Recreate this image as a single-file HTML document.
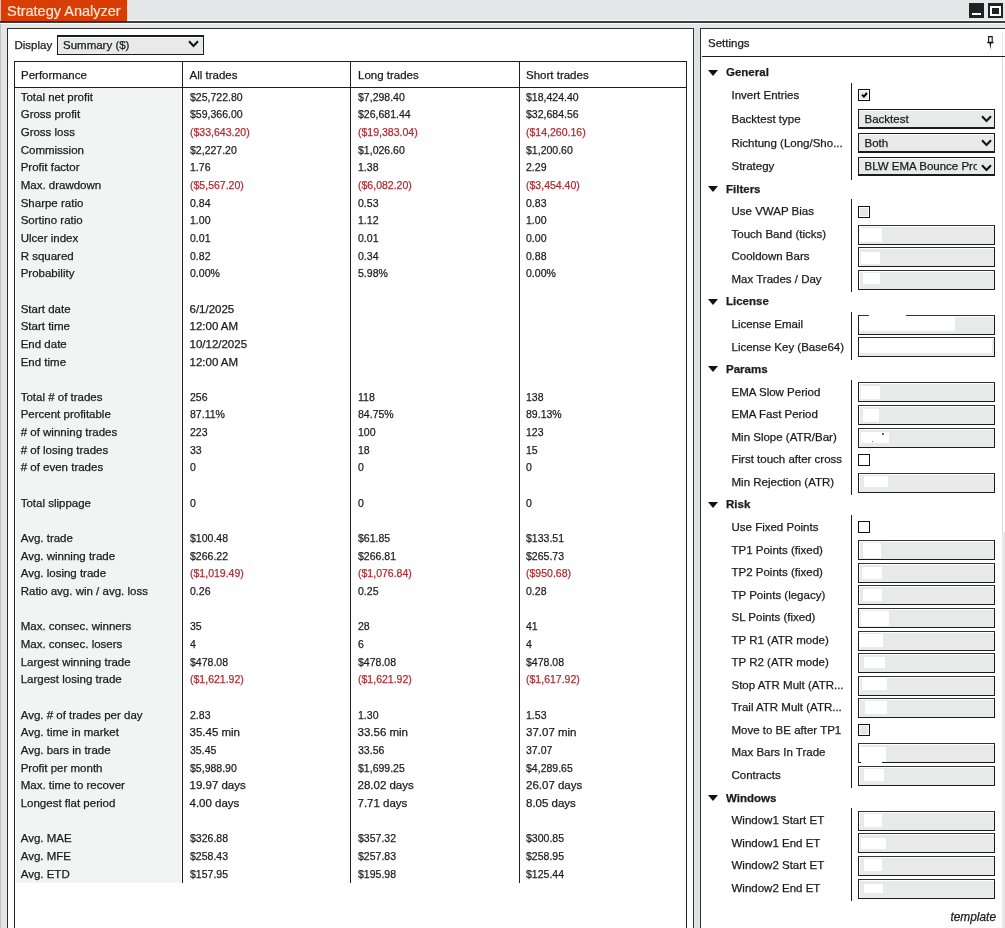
<!DOCTYPE html>
<html><head><meta charset="utf-8"><title>Strategy Analyzer</title>
<style>
*{box-sizing:border-box}
html,body{margin:0;padding:0}
body{width:1005px;height:928px;overflow:hidden;position:relative;background:#e4e5e7;font-family:"Liberation Sans",sans-serif;font-size:11.5px;color:#1b1b1b;-webkit-text-stroke:0.25px #1b1b1b}
.r{-webkit-text-stroke-color:#ad2b31}
.a{position:absolute}
.t{position:absolute;white-space:nowrap;line-height:14px}
.n{transform:scaleX(0.915);transform-origin:0 0}
.r{color:#ad2b31}
.b{font-weight:bold}
.hl{position:absolute;background:#1e1e1e}
.dd{position:absolute;border:1px solid #1c1c1c;border-bottom-width:2px;background:#e8e9e9;box-shadow:inset 0 1px 0 #fff}
.tb{position:absolute;border:1px solid #1c1c1c;border-top-color:#333;box-shadow:inset 1px 1px 0 #fff,0 0.6px 0 #444;background:#e8e9e9;box-shadow:inset 1px 1px 0 #fff}
.chk{position:absolute;width:12px;height:12px;border:1.3px solid #111;background:#fff;box-shadow:inset 0 0 0 1px #fff}
.blob{position:absolute;background:#fff}
</style></head><body><div class="a" style="left:0;top:0;width:1005px;height:928px;will-change:transform">

<div class="a" style="left:0;top:0;width:1005px;height:21px;background:#e6e7e9"></div>
<div class="a" style="left:0;top:0;width:1px;height:21px;background:#f3b59e"></div>
<div class="a" style="left:1px;top:0;width:126px;height:21px;background:#d93d04"></div>
<div class="t" style="left:7px;top:1.6px;font-size:14.5px;line-height:18px;color:#ffe6d8;-webkit-text-stroke:0.2px #ffe6d8">Strategy Analyzer</div>
<div class="a" style="left:127px;top:20px;width:878px;height:1px;background:#fafafa"></div>
<div class="a" style="left:0;top:21px;width:1005px;height:2px;background:#3f3f40"></div>
<div class="a" style="left:0;top:21px;width:127px;height:1px;background:#5b1c08"></div>
<div class="a" style="left:0;top:23px;width:1005px;height:1px;background:#fbfbfb"></div>
<div class="a" style="left:969px;top:3px;width:15px;height:15px;background:#222"></div>
<div class="a" style="left:972px;top:13px;width:9px;height:2px;background:#fff"></div>
<div class="a" style="left:988px;top:3px;width:15px;height:15px;background:#222"></div>
<div class="a" style="left:990px;top:6px;width:11px;height:10px;background:#fff"></div>
<div class="a" style="left:992px;top:8px;width:7px;height:6px;background:#222"></div>
<div class="a" style="left:0;top:24px;width:1px;height:904px;background:#c2c3c5"></div>
<div class="a" style="left:7px;top:28px;width:687px;height:900px;background:#fff;border:1px solid #2e2e2e;border-bottom:none"></div>
<div class="a" style="left:695px;top:29px;width:4px;height:899px;background:#dfe0e2"></div>
<div class="a" style="left:700px;top:28px;width:305px;height:900px;background:#fff;border-left:1px solid #2e2e2e;border-top:1px solid #2e2e2e"></div>
<div class="a" style="left:1002px;top:31px;width:1px;height:26px;background:#e8e8e8"></div>
<div class="a" style="left:1002px;top:532px;width:3px;height:396px;background:#e8e8e8"></div>
<div class="a" style="left:1002px;top:57px;width:1px;height:475px;background:#dadada"></div>
<div class="t" style="left:14.5px;top:37.90px">Display</div>
<div class="dd" style="left:57px;top:35.3px;width:147px;height:19.7px;border-top-width:2px;border-bottom-width:1px"></div>
<div class="t" style="left:63px;top:38.10px">Summary ($)</div>
<svg class="a" style="left:188.0px;top:40.0px" width="11" height="8" viewBox="0 0 11 8"><path d="M1 1.2 L5.5 6 L10 1.2" fill="none" stroke="#111" stroke-width="2"/></svg>
<div class="a" style="left:14px;top:61px;width:673px;height:867px;border:1px solid #1e1e1e;border-bottom:none;background:#fff"></div>
<div class="hl" style="left:14px;top:87px;width:673px;height:1px"></div>
<div class="a" style="left:15.6px;top:88px;width:165.4px;height:795px;background:#f2f3f3"></div>
<div class="hl" style="left:182px;top:62px;width:1px;height:821px"></div>
<div class="hl" style="left:350px;top:62px;width:1px;height:821px"></div>
<div class="hl" style="left:519px;top:62px;width:1px;height:821px"></div>
<div class="t" style="left:21.0px;top:67.50px">Performance</div>
<div class="t" style="left:189.5px;top:67.50px">All trades</div>
<div class="t" style="left:358.0px;top:67.50px">Long trades</div>
<div class="t" style="left:526.0px;top:67.50px">Short trades</div>
<div class="t" style="left:20.7px;top:89.70px">Total net profit</div>
<div class="t n" style="left:189.5px;top:89.70px">$25,722.80</div>
<div class="t n" style="left:357.5px;top:89.70px">$7,298.40</div>
<div class="t n" style="left:526.0px;top:89.70px">$18,424.40</div>
<div class="t" style="left:20.7px;top:107.36px">Gross profit</div>
<div class="t n" style="left:189.5px;top:107.36px">$59,366.00</div>
<div class="t n" style="left:357.5px;top:107.36px">$26,681.44</div>
<div class="t n" style="left:526.0px;top:107.36px">$32,684.56</div>
<div class="t" style="left:20.7px;top:125.01px">Gross loss</div>
<div class="t r n" style="left:189.5px;top:125.01px">($33,643.20)</div>
<div class="t r n" style="left:357.5px;top:125.01px">($19,383.04)</div>
<div class="t r n" style="left:526.0px;top:125.01px">($14,260.16)</div>
<div class="t" style="left:20.7px;top:142.66px">Commission</div>
<div class="t n" style="left:189.5px;top:142.66px">$2,227.20</div>
<div class="t n" style="left:357.5px;top:142.66px">$1,026.60</div>
<div class="t n" style="left:526.0px;top:142.66px">$1,200.60</div>
<div class="t" style="left:20.7px;top:160.32px">Profit factor</div>
<div class="t n" style="left:189.5px;top:160.32px">1.76</div>
<div class="t n" style="left:357.5px;top:160.32px">1.38</div>
<div class="t n" style="left:526.0px;top:160.32px">2.29</div>
<div class="t" style="left:20.7px;top:177.97px">Max. drawdown</div>
<div class="t r n" style="left:189.5px;top:177.97px">($5,567.20)</div>
<div class="t r n" style="left:357.5px;top:177.97px">($6,082.20)</div>
<div class="t r n" style="left:526.0px;top:177.97px">($3,454.40)</div>
<div class="t" style="left:20.7px;top:195.63px">Sharpe ratio</div>
<div class="t n" style="left:189.5px;top:195.63px">0.84</div>
<div class="t n" style="left:357.5px;top:195.63px">0.53</div>
<div class="t n" style="left:526.0px;top:195.63px">0.83</div>
<div class="t" style="left:20.7px;top:213.28px">Sortino ratio</div>
<div class="t n" style="left:189.5px;top:213.28px">1.00</div>
<div class="t n" style="left:357.5px;top:213.28px">1.12</div>
<div class="t n" style="left:526.0px;top:213.28px">1.00</div>
<div class="t" style="left:20.7px;top:230.94px">Ulcer index</div>
<div class="t n" style="left:189.5px;top:230.94px">0.01</div>
<div class="t n" style="left:357.5px;top:230.94px">0.01</div>
<div class="t n" style="left:526.0px;top:230.94px">0.00</div>
<div class="t" style="left:20.7px;top:248.60px">R squared</div>
<div class="t n" style="left:189.5px;top:248.60px">0.82</div>
<div class="t n" style="left:357.5px;top:248.60px">0.34</div>
<div class="t n" style="left:526.0px;top:248.60px">0.88</div>
<div class="t" style="left:20.7px;top:266.25px">Probability</div>
<div class="t n" style="left:189.5px;top:266.25px">0.00%</div>
<div class="t n" style="left:357.5px;top:266.25px">5.98%</div>
<div class="t n" style="left:526.0px;top:266.25px">0.00%</div>
<div class="t" style="left:20.7px;top:301.56px">Start date</div>
<div class="t" style="left:189.5px;top:301.56px">6/1/2025</div>
<div class="t" style="left:20.7px;top:319.21px">Start time</div>
<div class="t" style="left:189.5px;top:319.21px">12:00 AM</div>
<div class="t" style="left:20.7px;top:336.87px">End date</div>
<div class="t" style="left:189.5px;top:336.87px">10/12/2025</div>
<div class="t" style="left:20.7px;top:354.53px">End time</div>
<div class="t" style="left:189.5px;top:354.53px">12:00 AM</div>
<div class="t" style="left:20.7px;top:389.83px">Total # of trades</div>
<div class="t n" style="left:189.5px;top:389.83px">256</div>
<div class="t n" style="left:357.5px;top:389.83px">118</div>
<div class="t n" style="left:526.0px;top:389.83px">138</div>
<div class="t" style="left:20.7px;top:407.49px">Percent profitable</div>
<div class="t n" style="left:189.5px;top:407.49px">87.11%</div>
<div class="t n" style="left:357.5px;top:407.49px">84.75%</div>
<div class="t n" style="left:526.0px;top:407.49px">89.13%</div>
<div class="t" style="left:20.7px;top:425.15px"># of winning trades</div>
<div class="t n" style="left:189.5px;top:425.15px">223</div>
<div class="t n" style="left:357.5px;top:425.15px">100</div>
<div class="t n" style="left:526.0px;top:425.15px">123</div>
<div class="t" style="left:20.7px;top:442.80px"># of losing trades</div>
<div class="t n" style="left:189.5px;top:442.80px">33</div>
<div class="t n" style="left:357.5px;top:442.80px">18</div>
<div class="t n" style="left:526.0px;top:442.80px">15</div>
<div class="t" style="left:20.7px;top:460.45px"># of even trades</div>
<div class="t n" style="left:189.5px;top:460.45px">0</div>
<div class="t n" style="left:357.5px;top:460.45px">0</div>
<div class="t n" style="left:526.0px;top:460.45px">0</div>
<div class="t" style="left:20.7px;top:495.77px">Total slippage</div>
<div class="t n" style="left:189.5px;top:495.77px">0</div>
<div class="t n" style="left:357.5px;top:495.77px">0</div>
<div class="t n" style="left:526.0px;top:495.77px">0</div>
<div class="t" style="left:20.7px;top:531.08px">Avg. trade</div>
<div class="t n" style="left:189.5px;top:531.08px">$100.48</div>
<div class="t n" style="left:357.5px;top:531.08px">$61.85</div>
<div class="t n" style="left:526.0px;top:531.08px">$133.51</div>
<div class="t" style="left:20.7px;top:548.73px">Avg. winning trade</div>
<div class="t n" style="left:189.5px;top:548.73px">$266.22</div>
<div class="t n" style="left:357.5px;top:548.73px">$266.81</div>
<div class="t n" style="left:526.0px;top:548.73px">$265.73</div>
<div class="t" style="left:20.7px;top:566.39px">Avg. losing trade</div>
<div class="t r n" style="left:189.5px;top:566.39px">($1,019.49)</div>
<div class="t r n" style="left:357.5px;top:566.39px">($1,076.84)</div>
<div class="t r n" style="left:526.0px;top:566.39px">($950.68)</div>
<div class="t" style="left:20.7px;top:584.04px">Ratio avg. win / avg. loss</div>
<div class="t n" style="left:189.5px;top:584.04px">0.26</div>
<div class="t n" style="left:357.5px;top:584.04px">0.25</div>
<div class="t n" style="left:526.0px;top:584.04px">0.28</div>
<div class="t" style="left:20.7px;top:619.35px">Max. consec. winners</div>
<div class="t n" style="left:189.5px;top:619.35px">35</div>
<div class="t n" style="left:357.5px;top:619.35px">28</div>
<div class="t n" style="left:526.0px;top:619.35px">41</div>
<div class="t" style="left:20.7px;top:637.01px">Max. consec. losers</div>
<div class="t n" style="left:189.5px;top:637.01px">4</div>
<div class="t n" style="left:357.5px;top:637.01px">6</div>
<div class="t n" style="left:526.0px;top:637.01px">4</div>
<div class="t" style="left:20.7px;top:654.66px">Largest winning trade</div>
<div class="t n" style="left:189.5px;top:654.66px">$478.08</div>
<div class="t n" style="left:357.5px;top:654.66px">$478.08</div>
<div class="t n" style="left:526.0px;top:654.66px">$478.08</div>
<div class="t" style="left:20.7px;top:672.32px">Largest losing trade</div>
<div class="t r n" style="left:189.5px;top:672.32px">($1,621.92)</div>
<div class="t r n" style="left:357.5px;top:672.32px">($1,621.92)</div>
<div class="t r n" style="left:526.0px;top:672.32px">($1,617.92)</div>
<div class="t" style="left:20.7px;top:707.63px">Avg. # of trades per day</div>
<div class="t n" style="left:189.5px;top:707.63px">2.83</div>
<div class="t n" style="left:357.5px;top:707.63px">1.30</div>
<div class="t n" style="left:526.0px;top:707.63px">1.53</div>
<div class="t" style="left:20.7px;top:725.28px">Avg. time in market</div>
<div class="t" style="left:189.5px;top:725.28px">35.45 min</div>
<div class="t" style="left:357.5px;top:725.28px">33.56 min</div>
<div class="t" style="left:526.0px;top:725.28px">37.07 min</div>
<div class="t" style="left:20.7px;top:742.94px">Avg. bars in trade</div>
<div class="t n" style="left:189.5px;top:742.94px">35.45</div>
<div class="t n" style="left:357.5px;top:742.94px">33.56</div>
<div class="t n" style="left:526.0px;top:742.94px">37.07</div>
<div class="t" style="left:20.7px;top:760.59px">Profit per month</div>
<div class="t n" style="left:189.5px;top:760.59px">$5,988.90</div>
<div class="t n" style="left:357.5px;top:760.59px">$1,699.25</div>
<div class="t n" style="left:526.0px;top:760.59px">$4,289.65</div>
<div class="t" style="left:20.7px;top:778.25px">Max. time to recover</div>
<div class="t" style="left:189.5px;top:778.25px">19.97 days</div>
<div class="t" style="left:357.5px;top:778.25px">28.02 days</div>
<div class="t" style="left:526.0px;top:778.25px">26.07 days</div>
<div class="t" style="left:20.7px;top:795.90px">Longest flat period</div>
<div class="t" style="left:189.5px;top:795.90px">4.00 days</div>
<div class="t" style="left:357.5px;top:795.90px">7.71 days</div>
<div class="t" style="left:526.0px;top:795.90px">8.05 days</div>
<div class="t" style="left:20.7px;top:831.21px">Avg. MAE</div>
<div class="t n" style="left:189.5px;top:831.21px">$326.88</div>
<div class="t n" style="left:357.5px;top:831.21px">$357.32</div>
<div class="t n" style="left:526.0px;top:831.21px">$300.85</div>
<div class="t" style="left:20.7px;top:848.87px">Avg. MFE</div>
<div class="t n" style="left:189.5px;top:848.87px">$258.43</div>
<div class="t n" style="left:357.5px;top:848.87px">$257.83</div>
<div class="t n" style="left:526.0px;top:848.87px">$258.95</div>
<div class="t" style="left:20.7px;top:866.52px">Avg. ETD</div>
<div class="t n" style="left:189.5px;top:866.52px">$157.95</div>
<div class="t n" style="left:357.5px;top:866.52px">$195.98</div>
<div class="t n" style="left:526.0px;top:866.52px">$125.44</div>
<div class="t" style="left:708px;top:36.00px">Settings</div>
<div class="hl" style="left:702px;top:56px;width:303px;height:1px"></div>
<svg class="a" style="left:985px;top:35px" width="11" height="16" viewBox="0 0 11 16"><path d="M3.6 1.6 H7.2 V7.4 H3.6 Z" fill="#fff" stroke="#111" stroke-width="1.1"/><path d="M2.2 7.6 H8.6" stroke="#111" stroke-width="1.3"/><path d="M4.5 8 L5.4 14.5 L6.3 8 Z" fill="#111"/></svg>
<svg class="a" style="left:707.5px;top:69.50px" width="10" height="6" viewBox="0 0 10 6"><path d="M0 0 H10 L5 6 Z" fill="#111"/></svg>
<div class="t b" style="left:726px;top:65.30px">General</div>
<div class="t" style="left:731.5px;top:87.60px">Invert Entries</div>
<div class="chk" style="left:858px;top:89.00px;background:#e6e7e7"></div>
<svg class="a" style="left:860.5px;top:92.40px" width="7" height="7" viewBox="0 0 7 7"><path d="M1 2.6 L2.9 4.6 L6 1" fill="none" stroke="#000" stroke-width="2"/></svg>
<div class="t" style="left:731.5px;top:111.50px">Backtest type</div>
<div class="dd" style="left:858px;top:108.50px;width:137px;height:20.5px"></div>
<div class="t" style="left:864.5px;top:111.50px;width:112px;overflow:hidden">Backtest</div>
<svg class="a" style="left:981.0px;top:115.0px" width="11" height="8" viewBox="0 0 11 8"><path d="M1 1.2 L5.5 6 L10 1.2" fill="none" stroke="#111" stroke-width="2"/></svg>
<div class="t" style="left:731.5px;top:135.90px">Richtung (Long/Sho...</div>
<div class="dd" style="left:858px;top:132.80px;width:137px;height:20.5px"></div>
<div class="t" style="left:864.5px;top:135.90px;width:112px;overflow:hidden">Both</div>
<svg class="a" style="left:981.0px;top:139.3px" width="11" height="8" viewBox="0 0 11 8"><path d="M1 1.2 L5.5 6 L10 1.2" fill="none" stroke="#111" stroke-width="2"/></svg>
<div class="t" style="left:731.5px;top:159.30px">Strategy</div>
<div class="dd" style="left:858px;top:157.40px;width:137px;height:19.0px"></div>
<div class="t" style="left:864.5px;top:159.30px;width:112px;overflow:hidden">BLW EMA Bounce Pro</div>
<svg class="a" style="left:981.0px;top:163.9px" width="11" height="8" viewBox="0 0 11 8"><path d="M1 1.2 L5.5 6 L10 1.2" fill="none" stroke="#111" stroke-width="2"/></svg>
<svg class="a" style="left:707.5px;top:185.90px" width="10" height="6" viewBox="0 0 10 6"><path d="M0 0 H10 L5 6 Z" fill="#111"/></svg>
<div class="t b" style="left:726px;top:181.70px">Filters</div>
<div class="t" style="left:731.5px;top:204.25px">Use VWAP Bias</div>
<div class="chk" style="left:858px;top:205.65px;background:#e6e7e7"></div>
<div class="t" style="left:731.5px;top:226.80px">Touch Band (ticks)</div>
<div class="tb" style="left:858px;top:224.60px;width:137px;height:20px"></div>
<div class="blob" style="left:860.3px;top:227.5px;width:21.4px;height:14.0px"></div>
<div class="t" style="left:731.5px;top:249.35px">Cooldown Bars</div>
<div class="tb" style="left:858px;top:247.15px;width:137px;height:20px"></div>
<div class="blob" style="left:861.0px;top:252.0px;width:19.4px;height:11.5px"></div>
<div class="t" style="left:731.5px;top:271.90px">Max Trades / Day</div>
<div class="tb" style="left:858px;top:269.70px;width:137px;height:20px"></div>
<div class="blob" style="left:863.0px;top:272.5px;width:17.4px;height:11.5px"></div>
<svg class="a" style="left:707.5px;top:298.65px" width="10" height="6" viewBox="0 0 10 6"><path d="M0 0 H10 L5 6 Z" fill="#111"/></svg>
<div class="t b" style="left:726px;top:294.45px">License</div>
<div class="t" style="left:731.5px;top:317.00px">License Email</div>
<div class="tb" style="left:858px;top:314.80px;width:137px;height:20px"></div>
<div class="blob" style="left:859.0px;top:316.5px;width:95.6px;height:14.5px"></div>
<div class="blob" style="left:869.4px;top:314.0px;width:36.8px;height:3.5px"></div>
<div class="t" style="left:731.5px;top:339.55px">License Key (Base64)</div>
<div class="tb" style="left:858px;top:337.35px;width:137px;height:20px"></div>
<div class="blob" style="left:860.0px;top:339.0px;width:132.0px;height:14.0px"></div>
<svg class="a" style="left:707.5px;top:366.30px" width="10" height="6" viewBox="0 0 10 6"><path d="M0 0 H10 L5 6 Z" fill="#111"/></svg>
<div class="t b" style="left:726px;top:362.10px">Params</div>
<div class="t" style="left:731.5px;top:384.65px">EMA Slow Period</div>
<div class="tb" style="left:858px;top:382.45px;width:137px;height:20px"></div>
<div class="blob" style="left:860.6px;top:385.6px;width:19.8px;height:13.6px"></div>
<div class="t" style="left:731.5px;top:407.20px">EMA Fast Period</div>
<div class="tb" style="left:858px;top:405.00px;width:137px;height:20px"></div>
<div class="blob" style="left:863.0px;top:408.5px;width:16.2px;height:13.7px"></div>
<div class="t" style="left:731.5px;top:429.75px">Min Slope (ATR/Bar)</div>
<div class="tb" style="left:858px;top:427.55px;width:137px;height:20px"></div>
<div class="blob" style="left:861.2px;top:432.0px;width:27.9px;height:10.5px"></div>
<div class="t" style="left:731.5px;top:452.30px">First touch after cross</div>
<div class="chk" style="left:858px;top:453.70px;background:#fff"></div>
<div class="t" style="left:731.5px;top:474.85px">Min Rejection (ATR)</div>
<div class="tb" style="left:858px;top:472.65px;width:137px;height:20px"></div>
<div class="blob" style="left:863.7px;top:475.5px;width:24.8px;height:11.8px"></div>
<svg class="a" style="left:707.5px;top:501.60px" width="10" height="6" viewBox="0 0 10 6"><path d="M0 0 H10 L5 6 Z" fill="#111"/></svg>
<div class="t b" style="left:726px;top:497.40px">Risk</div>
<div class="t" style="left:731.5px;top:519.95px">Use Fixed Points</div>
<div class="chk" style="left:858px;top:521.35px;background:#fff"></div>
<div class="t" style="left:731.5px;top:542.50px">TP1 Points (fixed)</div>
<div class="tb" style="left:858px;top:540.30px;width:137px;height:20px"></div>
<div class="blob" style="left:863.3px;top:543.3px;width:18.1px;height:14.3px"></div>
<div class="t" style="left:731.5px;top:565.05px">TP2 Points (fixed)</div>
<div class="tb" style="left:858px;top:562.85px;width:137px;height:20px"></div>
<div class="blob" style="left:862.0px;top:566.7px;width:20.0px;height:12.1px"></div>
<div class="t" style="left:731.5px;top:587.60px">TP Points (legacy)</div>
<div class="tb" style="left:858px;top:585.40px;width:137px;height:20px"></div>
<div class="blob" style="left:863.0px;top:588.6px;width:19.0px;height:12.8px"></div>
<div class="t" style="left:731.5px;top:610.15px">SL Points (fixed)</div>
<div class="tb" style="left:858px;top:607.95px;width:137px;height:20px"></div>
<div class="blob" style="left:861.0px;top:611.3px;width:28.0px;height:14.3px"></div>
<div class="t" style="left:731.5px;top:632.70px">TP R1 (ATR mode)</div>
<div class="tb" style="left:858px;top:630.50px;width:137px;height:20px"></div>
<div class="blob" style="left:860.0px;top:634.0px;width:23.0px;height:12.8px"></div>
<div class="t" style="left:731.5px;top:655.25px">TP R2 (ATR mode)</div>
<div class="tb" style="left:858px;top:653.05px;width:137px;height:20px"></div>
<div class="blob" style="left:864.0px;top:657.3px;width:21.0px;height:10.6px"></div>
<div class="t" style="left:731.5px;top:677.80px">Stop ATR Mult (ATR...</div>
<div class="tb" style="left:858px;top:675.60px;width:137px;height:20px"></div>
<div class="blob" style="left:862.1px;top:678.2px;width:24.6px;height:12.3px"></div>
<div class="t" style="left:731.5px;top:700.35px">Trail ATR Mult (ATR...</div>
<div class="tb" style="left:858px;top:698.15px;width:137px;height:20px"></div>
<div class="blob" style="left:865.0px;top:700.8px;width:22.0px;height:13.0px"></div>
<div class="t" style="left:731.5px;top:722.90px">Move to BE after TP1</div>
<div class="chk" style="left:858px;top:724.30px;background:#e6e7e7"></div>
<div class="t" style="left:731.5px;top:745.45px">Max Bars In Trade</div>
<div class="tb" style="left:858px;top:743.25px;width:137px;height:20px"></div>
<div class="blob" style="left:860.0px;top:747.4px;width:26.0px;height:14.6px"></div>
<div class="blob" style="left:861.0px;top:761.0px;width:21.0px;height:3.0px"></div>
<div class="t" style="left:731.5px;top:768.00px">Contracts</div>
<div class="tb" style="left:858px;top:765.80px;width:137px;height:20px"></div>
<div class="blob" style="left:864.0px;top:769.3px;width:20.0px;height:11.7px"></div>
<svg class="a" style="left:707.5px;top:794.75px" width="10" height="6" viewBox="0 0 10 6"><path d="M0 0 H10 L5 6 Z" fill="#111"/></svg>
<div class="t b" style="left:726px;top:790.55px">Windows</div>
<div class="t" style="left:731.5px;top:813.10px">Window1 Start ET</div>
<div class="tb" style="left:858px;top:810.90px;width:137px;height:20px"></div>
<div class="blob" style="left:863.7px;top:814.2px;width:17.9px;height:12.8px"></div>
<div class="t" style="left:731.5px;top:835.65px">Window1 End ET</div>
<div class="tb" style="left:858px;top:833.45px;width:137px;height:20px"></div>
<div class="blob" style="left:861.0px;top:837.8px;width:25.0px;height:11.2px"></div>
<div class="t" style="left:731.5px;top:858.20px">Window2 Start ET</div>
<div class="tb" style="left:858px;top:856.00px;width:137px;height:20px"></div>
<div class="blob" style="left:864.0px;top:859.3px;width:18.0px;height:11.3px"></div>
<div class="t" style="left:731.5px;top:880.75px">Window2 End ET</div>
<div class="tb" style="left:858px;top:878.55px;width:137px;height:20px"></div>
<div class="blob" style="left:864.0px;top:883.9px;width:19.0px;height:8.7px"></div>
<div class="hl" style="left:851px;top:82.50px;width:1px;height:97.20px"></div>
<div class="hl" style="left:851px;top:199.15px;width:1px;height:93.15px"></div>
<div class="hl" style="left:851px;top:311.90px;width:1px;height:48.05px"></div>
<div class="hl" style="left:851px;top:379.55px;width:1px;height:115.70px"></div>
<div class="hl" style="left:851px;top:514.85px;width:1px;height:273.55px"></div>
<div class="hl" style="left:851px;top:808.00px;width:1px;height:93.15px"></div>
<div class="a" style="left:881.5px;top:432.5px;width:2px;height:2px;background:#333;border-radius:1px"></div>
<div class="a" style="left:871.5px;top:440.5px;width:1.5px;height:1.5px;background:#555;border-radius:1px"></div>
<div class="t" style="right:9px;top:909.60px;font-style:italic;font-size:11.9px">template</div>
</div></body></html>
